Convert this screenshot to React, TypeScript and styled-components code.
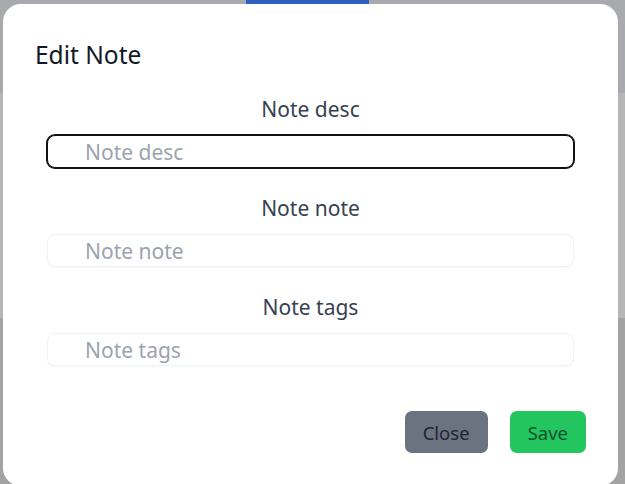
import React, { useEffect, useRef } from "react";
import styled, { createGlobalStyle } from "styled-components";

const GlobalStyle = createGlobalStyle`
  html, body {
    margin: 0;
    padding: 0;
    width: 625px;
    height: 484px;
    overflow: hidden;
    font-family: "Noto Sans", "Open Sans", sans-serif;
  }
`;

const Screen = styled.div`
  position: relative;
  width: 625px;
  height: 484px;
  overflow: hidden;
  display: flex;
  flex-direction: column;
`;

const PageHeader = styled.header`
  height: 93px;
  background: #a9aaad;
  display: flex;
  justify-content: flex-start;
  padding-left: 246px;
  box-sizing: border-box;
`;

const HeaderButton = styled.div`
  width: 123px;
  height: 4px;
  background: #2f62c0;
`;

const PageMain = styled.main`
  height: 225px;
  background: #b6b6b6;
`;

const PageFooter = styled.footer`
  flex: 1;
  background: #a3a3a3;
`;

const Modal = styled.div`
  position: absolute;
  top: 4px;
  left: 3px;
  width: 615px;
  height: 482px;
  background: #ffffff;
  border-radius: 18px;
  padding: 37px 32px 0;
  box-sizing: border-box;
  display: flex;
  flex-direction: column;
`;

const Title = styled.h2`
  margin: 0;
  font-size: 24.5px;
  line-height: 28px;
  font-weight: 400;
  color: #111827;
`;

const Form = styled.form`
  margin-top: 26px;
  display: flex;
  flex-direction: column;
`;

const Fields = styled.div`
  padding: 0 12px;
  display: flex;
  flex-direction: column;
`;

const Field = styled.div`
  display: flex;
  flex-direction: column;
  margin-bottom: 26px;
`;

const Label = styled.label`
  text-align: center;
  font-size: 21px;
  line-height: 28px;
  color: #374151;
  margin-bottom: 12px;
`;

const Input = styled.input`
  height: 33px;
  box-sizing: border-box;
  border: 1px solid #f1f2f4;
  border-radius: 8px;
  padding: 0 12px 0 37px;
  font-family: inherit;
  font-size: 21px;
  color: #111827;
  background: #ffffff;
  box-shadow: 0 1px 2px rgba(0, 0, 0, 0.03);
  outline: none;
  caret-color: #000;

  &::placeholder {
    color: #9ca3af;
  }

  &:focus {
    border: 1px solid #111111;
    box-shadow: 0 0 0 1px #111111;
  }
`;

const Actions = styled.div`
  margin-top: 19px;
  display: flex;
  justify-content: flex-end;
  gap: 22px;
`;

const Button = styled.button<{ $variant: "close" | "save" }>`
  height: 42px;
  padding: 0 18px;
  border: none;
  border-radius: 7px;
  font-family: inherit;
  font-size: 18.5px;
  cursor: pointer;
  background: ${(p) => (p.$variant === "close" ? "#6b7280" : "#22c55e")};
  color: ${(p) => (p.$variant === "close" ? "#1f2533" : "#14532d")};
`;

const fields = [
  { name: "desc", label: "Note desc" },
  { name: "note", label: "Note note" },
  { name: "tags", label: "Note tags" },
];

export default function App() {
  const firstRef = useRef<HTMLInputElement>(null);

  useEffect(() => {
    firstRef.current?.focus();
  }, []);

  return (
    <>
      <GlobalStyle />
      <Screen>
        <PageHeader>
          <HeaderButton />
        </PageHeader>
        <PageMain />
        <PageFooter />
        <Modal>
          <Title>Edit Note</Title>
          <Form onSubmit={(e) => e.preventDefault()}>
            <Fields>
              {fields.map((f, i) => (
                <Field key={f.name}>
                  <Label htmlFor={f.name}>{f.label}</Label>
                  <Input
                    id={f.name}
                    name={f.name}
                    placeholder={f.label}
                    ref={i === 0 ? firstRef : undefined}
                  />
                </Field>
              ))}
            </Fields>
            <Actions>
              <Button type="button" $variant="close">
                Close
              </Button>
              <Button type="submit" $variant="save">
                Save
              </Button>
            </Actions>
          </Form>
        </Modal>
      </Screen>
    </>
  );
}
